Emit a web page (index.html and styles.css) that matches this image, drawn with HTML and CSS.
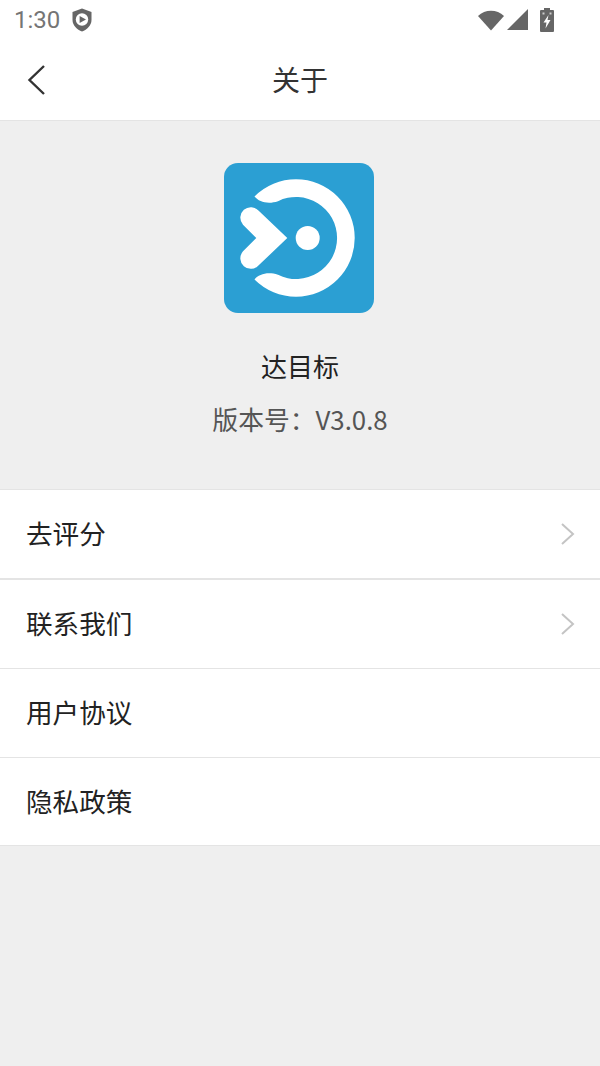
FILE: index.html
```html
<!DOCTYPE html>
<html lang="zh-CN">
<head>
    <meta charset="UTF-8">
    <meta name="viewport" content="width=device-width, initial-scale=1.0">
    <title>关于</title>
    <link rel="stylesheet" href="styles.css">
</head>
<body>

    <div class="status-bar">
        <div class="status-left">
            <span class="clock">1:30</span>
            <svg class="shield" width="20" height="24" viewBox="0 0 20 24">
                <path d="M10 .5 L19.500 4 V12 C19.500 17.500 15 21.500 10 23.500 C5 21.500 .5 17.500 .5 12 V4 Z" fill="#666"/>
                <circle cx="10" cy="11.500" r="6.200" fill="#fff"/>
                <path d="M7.600 8 L14 11.500 L7.600 15 Z" fill="#666"/>
            </svg>
        </div>
        <div class="status-right">
            <svg class="wifi" width="26" height="22" viewBox="0 0 26 22">
                <path d="M0 7 C7 0 19 0 26 7 L13 21.500 Z" fill="#666"/>
            </svg>
            <svg class="signal" width="21" height="22" viewBox="0 0 21 22">
                <path d="M0 21 L21 0 V21 Z" fill="#666"/>
            </svg>
            <svg width="14" height="24" viewBox="0 0 14 24">
                <path d="M4 0 H10 V2 H13 Q14 2 14 3 V23 Q14 24 13 24 H1 Q0 24 0 23 V3 Q0 2 1 2 H4 Z" fill="#666"/>
                <path d="M8.500 7 L3.500 14.500 H6.500 L5.500 20.500 L10.500 12 H7.500 Z" fill="#fff"/>
                <rect x="2.500" y="4.500" width="2" height="2" fill="#ccc"/>
                <rect x="9.500" y="4.500" width="2" height="2" fill="#ccc"/>
            </svg>
        </div>
    </div>

    <header class="nav-bar">
        <svg class="back" width="20" height="30" viewBox="0 0 20 30">
            <path d="M17 1 L2.500 15 L17 29" fill="none" stroke="#333" stroke-width="2.400"/>
        </svg>
        <h1>关于</h1>
    </header>

    <section class="about">
        <svg class="logo" width="150" height="150" viewBox="0 0 150 150">
            <rect width="150" height="150" rx="14" fill="#2b9fd3"/>
            <path d="M30.500 33.500 A58.700 58.700 0 1 1 30.500 116.500 C35 111 44 108.500 54 111.800 A41 41 0 1 0 54 38.200 C44 41.500 35 39 30.500 33.500 Z" fill="#fff"/>
            <circle cx="83.700" cy="75" r="12" fill="#fff"/>
            <path d="M32.300 75 L19 61.700 A10.500 10.500 0 0 1 34.700 47.700 L63.300 75 L34.700 102.300 A10.500 10.500 0 0 1 19 88.300 Z" fill="#fff"/>
        </svg>
        <div class="app-name">达目标</div>
        <div class="app-version">版本号：V3.0.8</div>
    </section>

    <ul class="menu">
        <li class="menu-item">
            <span>去评分</span>
            <svg width="16" height="24" viewBox="0 0 16 24"><path d="M2 2 L13 12 L2 22" fill="none" stroke="#c4c4c4" stroke-width="2"/></svg>
        </li>
        <li class="menu-item">
            <span>联系我们</span>
            <svg width="16" height="24" viewBox="0 0 16 24"><path d="M2 2 L13 12 L2 22" fill="none" stroke="#c4c4c4" stroke-width="2"/></svg>
        </li>
        <li class="menu-item"><span>用户协议</span></li>
        <li class="menu-item"><span>隐私政策</span></li>
    </ul>

    <div class="filler"></div>

</body>
</html>
```

FILE: styles.css
```css
* {
    box-sizing: border-box;
}
body {
    margin: 0;
    width: 600px;
    height: 1066px;
    overflow: hidden;
    display: flex;
    flex-direction: column;
    background-color: #fff;
    color: #222;
    font-family: "Noto Sans CJK SC", "Noto Sans", sans-serif;
}
.status-bar {
    height: 40px;
    padding: 0 46px 0 14px;
    display: flex;
    justify-content: space-between;
    align-items: center;
    flex-shrink: 0;
}
.status-left {
    display: flex;
    align-items: center;
    gap: 12px;
}
.clock {
    font-family: Roboto, sans-serif;
    font-size: 24px;
    color: #757575;
}
.status-right {
    display: flex;
    align-items: center;
    gap: 12px;
}
.status-right .wifi {
    margin-right: -9px;
}
.nav-bar {
    height: 81px;
    padding-left: 27px;
    display: flex;
    align-items: center;
    position: relative;
    flex-shrink: 0;
    border-bottom: 1px solid #e4e4e4;
}
.nav-bar h1 {
    margin: -2px 0 0;
    position: absolute;
    left: 0;
    right: 0;
    text-align: center;
    font-size: 28px;
    line-height: 40px;
    font-weight: 400;
    color: #333;
}
.about {
    height: 368px;
    padding-top: 42px;
    display: flex;
    flex-direction: column;
    align-items: center;
    background-color: #efefef;
    flex-shrink: 0;
}
.logo {
    display: block;
    margin-right: 2px;
}
.app-name {
    margin-top: 33px;
    font-size: 26px;
    line-height: 40px;
    color: #222;
}
.app-version {
    margin-top: 13px;
    font-size: 25.800px;
    line-height: 40px;
    color: #555;
}
.menu {
    margin: 0;
    padding: 0;
    list-style: none;
    flex-shrink: 0;
    border-top: 1px solid #e4e4e4;
}
.menu-item {
    height: 89px;
    padding: 0 24px 3px 26px;
    display: flex;
    justify-content: space-between;
    align-items: center;
    font-size: 26.600px;
    color: #222;
    border-bottom: 1px solid #e4e4e4;
}
.menu-item:first-child {
    height: 90px;
    border-bottom-width: 2px;
}
.menu-item:last-child {
    height: 88px;
    padding-bottom: 2px;
}
.menu-item svg {
    margin-top: 3px;
}
.filler {
    flex: 1;
    background-color: #efefef;
}
```
